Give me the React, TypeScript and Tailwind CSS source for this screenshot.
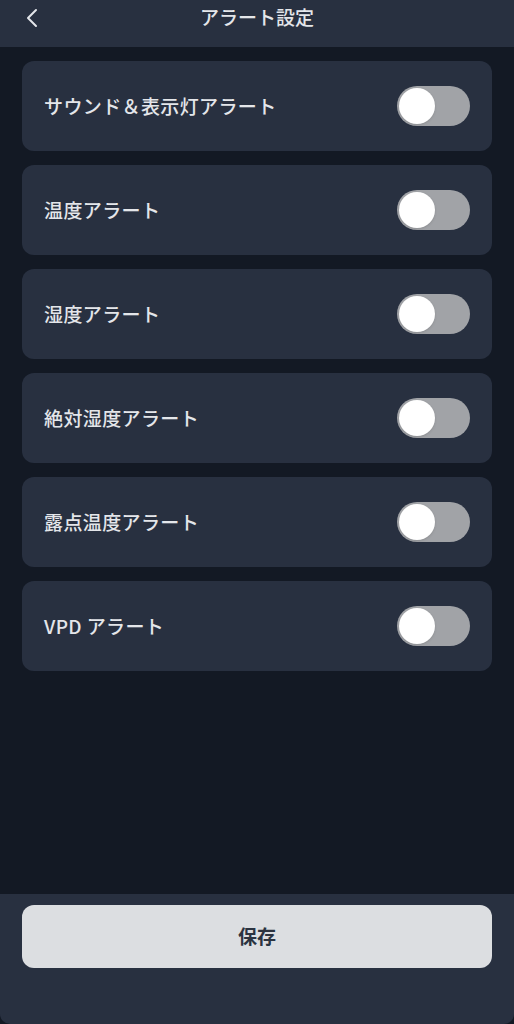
import React, { useState } from "react";

const alerts = [
  "サウンド＆表示灯アラート",
  "温度アラート",
  "湿度アラート",
  "絶対湿度アラート",
  "露点温度アラート",
  "VPD アラート",
];

const Toggle: React.FC<{ on: boolean; onClick: () => void }> = ({ on, onClick }) => (
  <button
    onClick={onClick}
    className={`relative w-[73px] h-[40px] rounded-full flex items-center px-[2px] ${
      on ? "bg-[#22c55e] justify-end" : "bg-[#a1a3a7] justify-start"
    }`}
  >
    <span className="block w-[36px] h-[36px] rounded-full bg-white shadow" />
  </button>
);

const App: React.FC = () => {
  const [states, setStates] = useState<boolean[]>(alerts.map(() => false));

  const flip = (idx: number) => {
    setStates(prev => prev.map((s, i) => (i === idx ? !s : s)));
  };

  return (
    <div
      className="w-[514px] h-[1024px] flex flex-col bg-[#131924] text-[#e4e6ea] overflow-hidden"
      style={{ fontFamily: '"Noto Sans CJK JP", "Noto Sans", sans-serif' }}
    >
      <div className="h-[47px] shrink-0 bg-[#283040] flex items-center relative">
        <svg
          className="absolute left-[24px] top-[7px]"
          width="18"
          height="22"
          viewBox="0 0 18 22"
          fill="none"
          stroke="#e4e6ea"
          strokeWidth="2"
          strokeLinecap="round"
          strokeLinejoin="round"
        >
          <path d="M12 3 L4 11 L12 19" />
        </svg>
        <div className="w-full text-center text-[19px] font-medium -mt-[13px]">アラート設定</div>
      </div>

      <div className="flex-1 px-[22px] pt-[14px] flex flex-col gap-[14px]">
        {alerts.map((label, idx) => (
          <div
            key={label}
            className="h-[90px] rounded-[12px] bg-[#283040] flex items-center justify-between pl-[22px] pr-[22px]"
          >
            <span className="text-[19px] tracking-[0.02em] font-medium">{label}</span>
            <Toggle on={states[idx]} onClick={() => flip(idx)} />
          </div>
        ))}
      </div>

      <div className="h-[130px] shrink-0 bg-[#283040] rounded-b-[10px] px-[22px] pt-[11px]">
        <button className="w-full h-[63px] rounded-[12px] bg-[#dcdee1] text-[#2b3340] text-[19px] font-bold">
          保存
        </button>
      </div>
    </div>
  );
};

export default App;
